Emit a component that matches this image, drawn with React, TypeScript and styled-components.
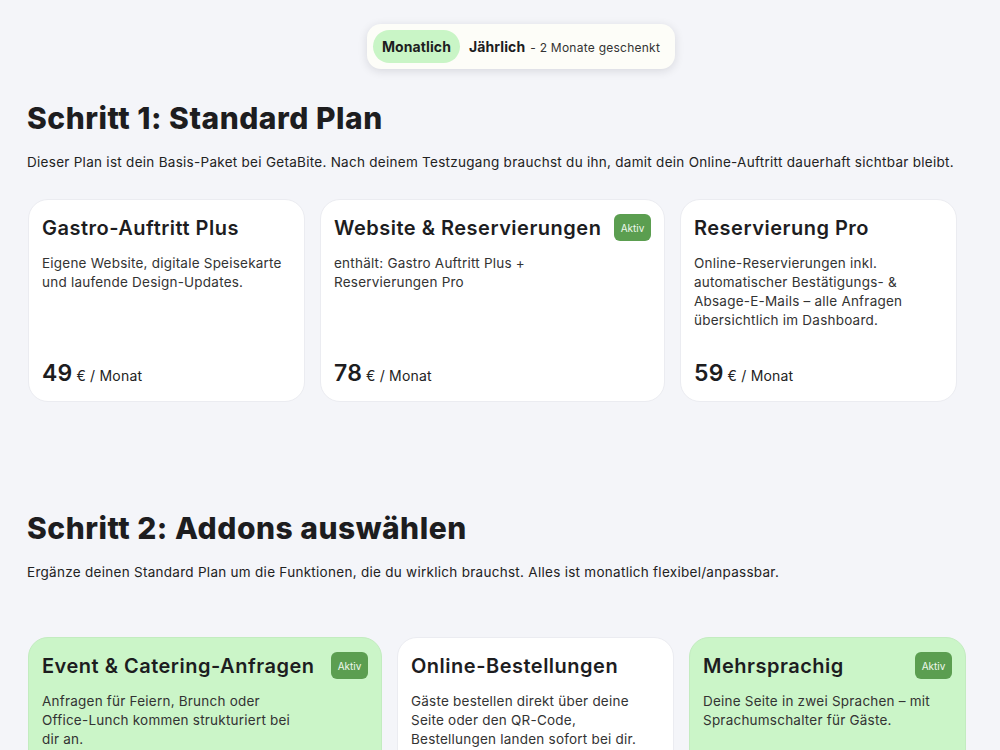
import React from 'react'
import styled, { createGlobalStyle } from 'styled-components'

const GlobalStyle = createGlobalStyle`
    body {
        margin: 0;
        background: #f4f5f9;
        font-family: Inter, "Noto Sans", sans-serif;
        color: #1d1d1f;
    }
`

const Page = styled.div`
    padding: 24px 27px 0;
`
const ToggleWrap = styled.div`
    display: flex;
    justify-content: center;
    padding-left: 42px;
`
const Toggle = styled.div`
    display: inline-flex;
    align-items: center;
    gap: 9px;
    padding: 6px 15px 6px 6px;
    background: #fdfdf8;
    border-radius: 14px;
    box-shadow: 0 2px 10px rgba(20, 20, 40, 0.13);
`
const Option = styled.div<{ $selected?: boolean }>`
    display: flex;
    align-items: baseline;
    height: 33px;
    line-height: 33px;
    padding: 0 ${p => (p.$selected ? '9px' : '0')};
    border-radius: 17px;
    background: ${p => (p.$selected ? '#c9f5c6' : 'transparent')};
    font-size: 14px;
    font-weight: 700;
    letter-spacing: 0.1px;
`
const Note = styled.span`
    margin-left: 5px;
    font-size: 12px;
    font-weight: 400;
    letter-spacing: 0.25px;
    color: #333;
`
const Heading = styled.h2<{ $top: number }>`
    margin: ${p => p.$top}px 0 0;
    font-size: 30px;
    line-height: 36px;
    font-weight: 800;
    letter-spacing: 0.5px;
`
const Lead = styled.p`
    margin: 16px 0 0;
    font-size: 13.5px;
    line-height: 20px;
    letter-spacing: 0.28px;
    color: #222;
`
const CardRow = styled.div<{ $cols: string; $top: number }>`
    display: grid;
    grid-template-columns: ${p => p.$cols};
    column-gap: 15px;
    margin-top: ${p => p.$top}px;
    padding-left: 1px;
`
const Card = styled.div<{ $active?: boolean }>`
    box-sizing: border-box;
    display: flex;
    flex-direction: column;
    min-height: 203px;
    padding: 14px 13px 14px;
    border-radius: 20px;
    background: ${p => (p.$active ? '#cbf5c8' : '#ffffff')};
    border: 1px solid ${p => (p.$active ? '#c3ecc0' : '#ebecf1')};
`
const TitleRow = styled.div`
    display: flex;
    justify-content: space-between;
    align-items: flex-start;
    gap: 12px;
`
const Title = styled.h3`
    margin: 0;
    padding-top: 1px;
    font-size: 20px;
    line-height: 26px;
    font-weight: 600;
    letter-spacing: 0.5px;
    white-space: nowrap;
`
const Badge = styled.span`
    flex: none;
    display: inline-flex;
    align-items: center;
    justify-content: center;
    width: 37px;
    height: 27px;
    border-radius: 6px;
    background: #5b9e50;
    color: #eef8ec;
    font-size: 10px;
`
const Desc = styled.p`
    margin: 13px 0 0;
    font-size: 13.5px;
    line-height: 19px;
    letter-spacing: 0.22px;
    color: #333;
    white-space: pre-line;
`
const Price = styled.div`
    margin-top: auto;
    display: flex;
    align-items: baseline;
    gap: 4px;
    font-size: 14px;
    letter-spacing: 0.2px;
    color: #222;
`
const Amount = styled.span`
    font-size: 23px;
    font-weight: 600;
    color: #1d1d1f;
`

type Plan = { title: string; desc: string; price?: number; active?: boolean }

const plans: Plan[] = [
    { title: 'Gastro-Auftritt Plus', desc: 'Eigene Website, digitale Speisekarte\nund laufende Design-Updates.', price: 49 },
    { title: 'Website & Reservierungen', desc: 'enthält: Gastro Auftritt Plus +\nReservierungen Pro', price: 78, active: true },
    {
        title: 'Reservierung Pro',
        desc: 'Online-Reservierungen inkl.\nautomatischer Bestätigungs- &\nAbsage-E-Mails – alle Anfragen\nübersichtlich im Dashboard.',
        price: 59,
    },
]

const addons: Plan[] = [
    { title: 'Event & Catering-Anfragen', desc: 'Anfragen für Feiern, Brunch oder\nOffice-Lunch kommen strukturiert bei\ndir an.', active: true },
    { title: 'Online-Bestellungen', desc: 'Gäste bestellen direkt über deine\nSeite oder den QR-Code,\nBestellungen landen sofort bei dir.' },
    { title: 'Mehrsprachig', desc: 'Deine Seite in zwei Sprachen – mit\nSprachumschalter für Gäste.', active: true },
]

const PlanCard = ({ plan, highlight }: { plan: Plan; highlight: boolean }) => (
    <Card $active={highlight && plan.active}>
        <TitleRow>
            <Title>{plan.title}</Title>
            {plan.active && <Badge>Aktiv</Badge>}
        </TitleRow>
        <Desc>{plan.desc}</Desc>
        {plan.price !== undefined && (
            <Price>
                <Amount>{plan.price}</Amount>€ / Monat
            </Price>
        )}
    </Card>
)

const App = () => {
    return (
        <Page>
            <GlobalStyle />
            <ToggleWrap>
                <Toggle>
                    <Option $selected>Monatlich</Option>
                    <Option>
                        Jährlich<Note>- 2 Monate geschenkt</Note>
                    </Option>
                </Toggle>
            </ToggleWrap>

            <Heading $top={31}>Schritt 1: Standard Plan</Heading>
            <Lead>
                Dieser Plan ist dein Basis-Paket bei GetaBite. Nach deinem Testzugang brauchst du ihn, damit dein Online-Auftritt dauerhaft sichtbar bleibt.
            </Lead>
            <CardRow $cols="277px 345px 277px" $top={27}>
                {plans.map(plan => (
                    <PlanCard key={plan.title} plan={plan} highlight={false} />
                ))}
            </CardRow>

            <Heading $top={108}>Schritt 2: Addons auswählen</Heading>
            <Lead>Ergänze deinen Standard Plan um die Funktionen, die du wirklich brauchst. Alles ist monatlich flexibel/anpassbar.</Lead>
            <CardRow $cols="354px 277px 277px" $top={55}>
                {addons.map(plan => (
                    <PlanCard key={plan.title} plan={plan} highlight />
                ))}
            </CardRow>
        </Page>
    )
}

export default App
